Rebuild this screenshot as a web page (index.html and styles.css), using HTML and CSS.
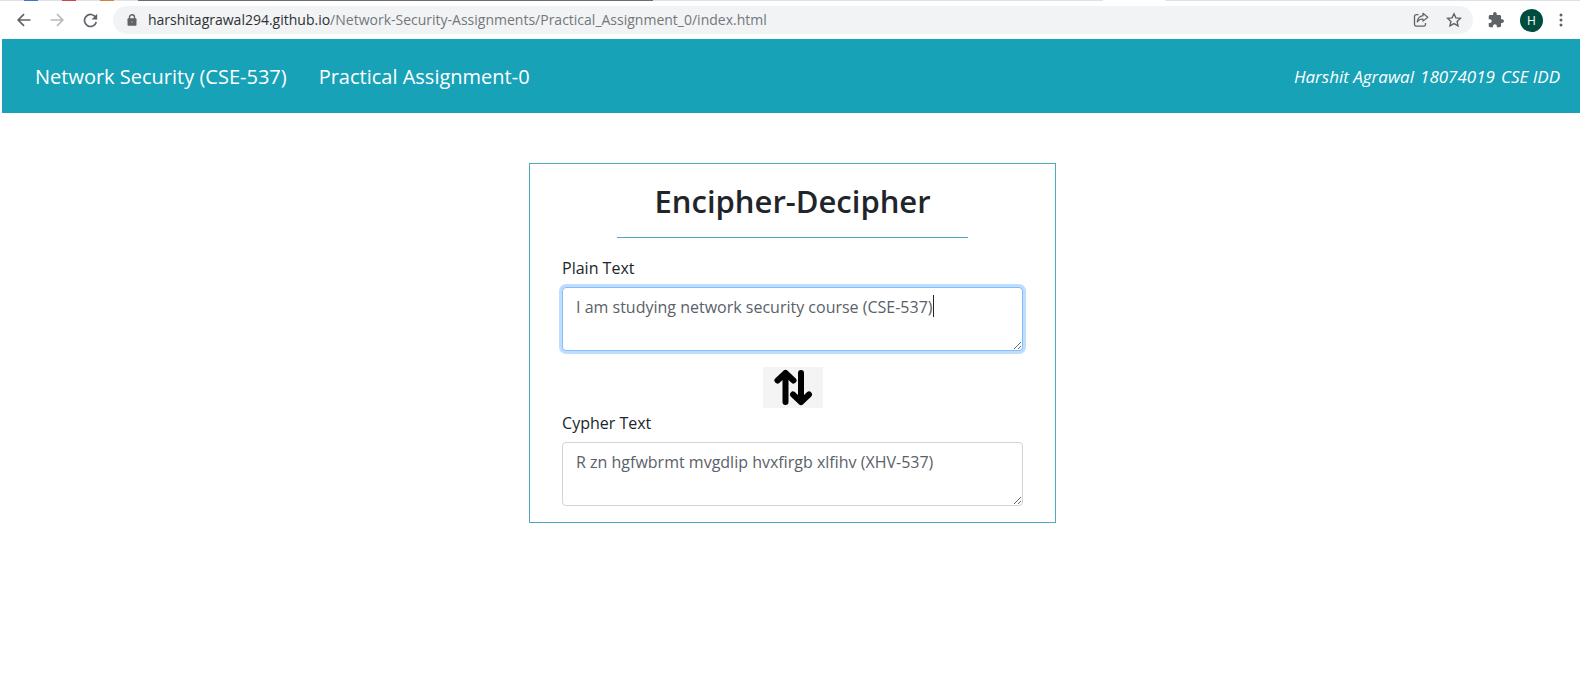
FILE: index.html
```html
<!DOCTYPE html>
<html lang="en">
<head>
<meta charset="utf-8">
<title>Encipher-Decipher</title>
<link rel="stylesheet" href="styles.css">
</head>
<body>
<header class="browser">
  <div class="tabs"><i class="tab-icon blue"></i><i class="tab-icon red"></i><i class="tab-icon orange"></i><i class="tab-dark"></i><i class="tab-rest"></i><i class="tab-active"></i><i class="tab-end"></i></div>
  <div class="toolbar">
    <div class="history">
      <button class="tool" aria-label="Back"><svg width="14" height="14" viewBox="0 0 14 14"><path d="M13.5 7H1.5M7 1.2L1.2 7L7 12.800" fill="none" stroke="#5f6368" stroke-width="1.7"/></svg></button>
      <button class="tool" aria-label="Forward"><svg width="14" height="14" viewBox="0 0 14 14"><path d="M.5 7H12.500M7 1.200L12.800 7L7 12.800" fill="none" stroke="#b8babd" stroke-width="1.700"/></svg></button>
      <button class="tool" aria-label="Reload"><svg width="15" height="15" viewBox="0 0 15 15"><path d="M12.600 4.300A6 6 0 1 0 13.300 9" fill="none" stroke="#5f6368" stroke-width="1.700"/><path d="M14.200 .8V6.500H8.500z" fill="#5f6368"/></svg></button>
    </div>
    <div class="omnibox">
      <svg class="lock" width="10" height="12" viewBox="0 0 10 12"><path d="M2.500 5V3.200a2.500 2.500 0 0 1 5 0V5" fill="none" stroke="#5f6368" stroke-width="1.400"/><rect x=".5" y="4.300" width="9" height="7.500" rx="1" fill="#5f6368"/><circle cx="5" cy="8" r="1" fill="#85888c"/></svg>
      <div class="url" contenteditable="true" role="textbox" aria-label="Address" spellcheck="false"><span class="host">harshitagrawal294.github.io</span>/Network-Security-Assignments/Practical_Assignment_0/index.html</div>
      <button class="tool" aria-label="Share"><svg width="16" height="16" viewBox="0 0 16 16"><path d="M5.500 2.700H3.200Q1.500 2.700 1.500 4.400V12.500Q1.500 14.200 3.200 14.200H10.800Q12.500 14.200 12.500 12.500V11" fill="none" stroke="#5f6368" stroke-width="1.300"/><path d="M10 1.300L14.800 5.200L10 9.100V7Q6.300 6.800 4.200 10Q4.800 4.500 10 3.700z" fill="none" stroke="#5f6368" stroke-width="1.200" stroke-linejoin="round"/></svg></button>
      <button class="tool" aria-label="Bookmark this page"><svg width="16" height="16" viewBox="0 0 16 16"><path d="M8 1.800L9.900 5.900L14.400 6.400L11.100 9.500L12 13.900L8 11.600L4 13.900L4.900 9.500L1.600 6.400L6.100 5.900z" fill="none" stroke="#5f6368" stroke-width="1.400"/></svg></button>
    </div>
    <div class="actions">
      <button class="tool" aria-label="Extensions"><svg width="16" height="16" viewBox="1 1 22 22"><path fill="#5f6368" d="M20.500 11H19V7c0-1.100-.9-2-2-2h-4V3.500a2.500 2.500 0 0 0-5 0V5H4c-1.100 0-2 .9-2 2v3.800h1.500a2.700 2.700 0 0 1 0 5.400H2V20c0 1.100.9 2 2 2h3.800v-1.500a2.700 2.700 0 0 1 5.400 0V22H17c1.100 0 2-.9 2-2v-4h1.500a2.500 2.500 0 0 0 0-5z"/></svg></button>
      <button class="avatar" aria-label="Profile">H</button>
      <button class="tool" aria-label="Menu"><svg width="4" height="14" viewBox="0 0 4 14" fill="#5f6368"><circle cx="2" cy="2" r="1.500"/><circle cx="2" cy="7" r="1.500"/><circle cx="2" cy="12" r="1.500"/></svg></button>
    </div>
  </div>
</header>
<div class="page">
  <nav class="navbar">
    <a href="#">Network Security (CSE-537)</a>
    <a href="#">Practical Assignment-0</a>
    <em class="author"><span>Harshit Agrawal</span><span>18074019</span><span>CSE IDD</span></em>
  </nav>
  <main class="card">
    <h1>Encipher-Decipher</h1>
    <hr>
    <label for="plain">Plain Text</label>
    <div class="field">
      <textarea id="plain" class="active" rows="2" spellcheck="false">I am studying network security course (CSE-537)</textarea>
      <div class="caret-line" aria-hidden="true"><i class="caret"></i></div>
    </div>
    <button class="swap" aria-label="Swap"><svg width="40" height="37" viewBox="0 0 40 37" fill="none" stroke="#000" stroke-width="6" stroke-linecap="round" stroke-linejoin="round"><path d="M12.500 33V4M4.500 11.500L12.500 4L20.500 11.500M28 4V33M20 25.500L28 33L36 25.500"/></svg></button>
    <label for="cypher">Cypher Text</label>
    <div class="field"><textarea id="cypher" rows="2" spellcheck="false">R zn hgfwbrmt mvgdlip hvxfirgb xlfihv (XHV-537)</textarea></div>
  </main>
</div>
</body>
</html>
```
FILE: styles.css
```css
* { box-sizing: border-box; }
body { margin: 0; background: #fff; color: #212529; font-family: "Open Sans", "Noto Sans", sans-serif; font-size: 16px; line-height: 25px; }
button { border: 0; padding: 0; background: none; font: inherit; display: flex; align-items: center; justify-content: center; }
svg { display: block; }
.tabs { display: flex; height: 1px; background: #dee1e6; }
.tab-icon { width: 14px; margin-left: 24px; }
.blue { background: #4372d0; }
.red { background: #d04545; }
.orange { background: #d98238; }
.tab-dark { flex: 515; margin-left: 24px; background: #6b6b70; }
.tab-rest { flex: 451; }
.tab-active { flex: 62; background: #fff; }
.tab-end { flex: 415; }
.toolbar { display: flex; align-items: center; height: 38px; padding: 0 17px 0 17px; gap: 15px; }
.history { display: flex; gap: 19px; }
.omnibox { display: flex; flex: 1; align-items: center; height: 28px; padding: 0 11px 0 14px; gap: 17px; border-radius: 14px; background: #f1f3f4; }
.url { flex: 1; margin-left: -6px; color: #74777b; font-size: 14px; line-height: 26px; white-space: nowrap; outline: 0; }
.host { color: #2e3135; }
.actions { display: flex; align-items: center; gap: 16px; }
.avatar { width: 23px; height: 23px; border-radius: 50%; background: #004d40; color: #fff; font-size: 12px; }
.page { margin-left: 2px; }
.navbar { display: flex; align-items: center; height: 74px; padding: 1px 20px 0 33px; gap: 32px; background: #17a2b8; font-size: 20px; }
.navbar a { color: #fff; text-decoration: none; }
.author { display: flex; gap: 6px; margin-left: auto; color: #fff; font-size: 17px; }
.card { display: flex; flex-direction: column; width: 33.4%; margin: 50px 0 0 33.4%; padding: 16px 32px 16px; border: 1px solid #4fa9bd; }
h1 { margin: 0; font-size: 31px; font-weight: 600; line-height: 42px; text-align: center; }
hr { width: 76%; margin: 15px auto 18px; border: 0; border-top: 1px solid #4fa9bd; }
label { margin-bottom: 6px; }
.field { position: relative; display: flex; }
textarea { flex: 1; min-width: 0; padding: 7px 13px 5px; border: 1px solid #ced4da; border-radius: 4px; background: #fff; color: #5a6168; font: inherit; outline: 0; }
textarea.active, textarea:focus { border-color: #80bdff; box-shadow: 0 0 0 3px #bfdeff; }
.caret-line { position: absolute; top: 8px; left: 371px; }
.caret { display: block; width: 1px; height: 22px; background: #212529; }
.swap { align-self: center; width: 60px; height: 41px; margin: 16px 0 3px; background: #f4f4f4; }
```
